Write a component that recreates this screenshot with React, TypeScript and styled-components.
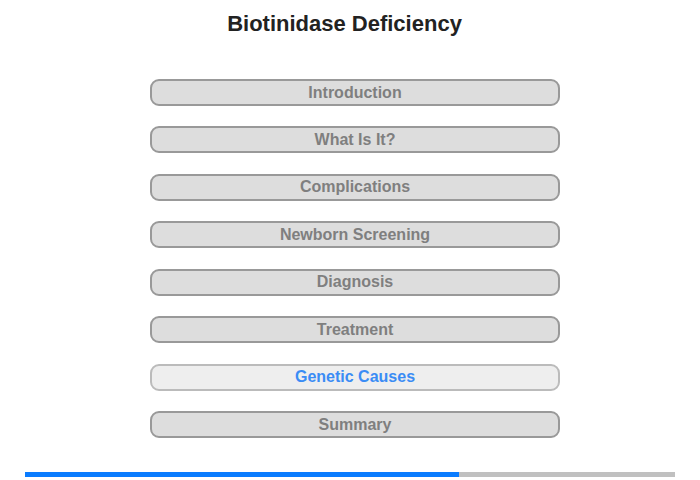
import { styled, createGlobalStyle } from "styled-components";

const sections = [
  "Introduction",
  "What Is It?",
  "Complications",
  "Newborn Screening",
  "Diagnosis",
  "Treatment",
  "Genetic Causes",
  "Summary",
];

const current = "Genetic Causes";
const progress = 0.667;

function App() {
  return (
    <>
      <GlobalStyle />
      <Page>
        <Title>Biotinidase Deficiency</Title>
        <Menu>
          {sections.map((name) => (
            <MenuButton key={name} $active={name === current}>
              {name}
            </MenuButton>
          ))}
        </Menu>
        <Progress>
          <ProgressFill style={{ width: `${progress * 100}%` }} />
        </Progress>
      </Page>
    </>
  );
}

const GlobalStyle = createGlobalStyle`
  body {
    margin: 0;
    background: #fff;
    font-family: "Liberation Sans", Arial, sans-serif;
  }
`;

const Page = styled.div`
  width: 700px;
  height: 480px;
  display: flex;
  flex-direction: column;
  align-items: center;
`;

const Title = styled.h1`
  margin: 11px 11px 0 0;
  font-size: 22px;
  line-height: 26px;
  font-weight: bold;
  color: #222;
`;

const Menu = styled.div`
  margin: 42px 0 0 10px;
  width: 410px;
  display: flex;
  flex-direction: column;
  gap: 20.45px;
`;

const MenuButton = styled.div<{ $active: boolean }>`
  box-sizing: border-box;
  height: 27px;
  display: flex;
  align-items: center;
  justify-content: center;
  border: 2px solid ${(p) => (p.$active ? "#bbb" : "#999")};
  border-radius: 9px;
  background: ${(p) => (p.$active ? "#eee" : "#ddd")};
  color: ${(p) => (p.$active ? "#3a8cf5" : "#7f7f7f")};
  font-size: 16px;
  font-weight: bold;
  cursor: pointer;
`;

const Progress = styled.div`
  margin-top: 34px;
  width: 650px;
  height: 5px;
  background: #c0c0c0;
`;

const ProgressFill = styled.div`
  height: 100%;
  background: #0a7cff;
`;

export default App;
